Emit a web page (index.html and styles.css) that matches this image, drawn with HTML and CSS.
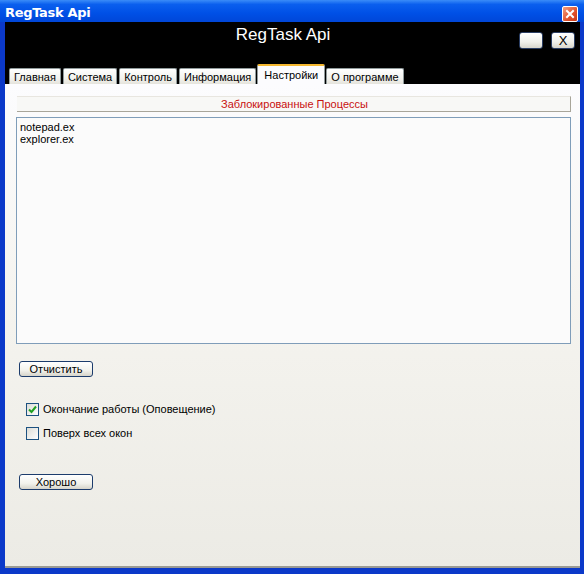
FILE: index.html
```html
<!DOCTYPE html>
<html>
<head>
<meta charset="utf-8">
<link rel="stylesheet" href="styles.css">
</head>
<body>
<div class="window">
  <div class="titlebar">
    <span class="title">RegTask Api</span>
    <span class="close-x">
      <svg width="14" height="14" viewBox="0 0 14 14"><path d="M4 4 L10 10 M10 4 L4 10" stroke="#fff" stroke-width="2" stroke-linecap="square"/></svg>
    </span>
  </div>
  <div class="client">
    <div class="header">
      <div class="header-top">
        <div class="spacer"></div>
        <div class="app-title">RegTask Api</div>
        <div class="hbtns">
          <button class="hbtn"></button>
          <button class="hbtn">X</button>
        </div>
      </div>
      <div class="tabs">
        <div class="tab">Главная</div>
        <div class="tab">Система</div>
        <div class="tab">Контроль</div>
        <div class="tab">Информация</div>
        <div class="tab active">Настройки</div>
        <div class="tab">О программе</div>
      </div>
    </div>
    <div class="panel">
      <div class="caption">Заблокированные Процессы</div>
      <div class="listbox">
        <div>notepad.ex</div>
        <div>explorer.ex</div>
      </div>
      <button class="btn btn-clear">Отчистить</button>
      <div class="checks">
        <label class="check"><span class="box checked"><svg width="9" height="9" viewBox="0 0 9 9"><path d="M1 4.5 L3.5 7 L8 1.5" fill="none" stroke="#21a121" stroke-width="2"/></svg></span>Окончание работы (Оповещение)</label>
        <label class="check"><span class="box"></span>Поверх всех окон</label>
      </div>
      <button class="btn btn-ok">Хорошо</button>
    </div>
  </div>
</div>
</body>
</html>
```
FILE: styles.css
```css
html, body {
  margin: 0;
  padding: 0;
  background: #ffffff;
}
.window {
  width: 584px;
  height: 574px;
  box-sizing: border-box;
  background: #0b39c9;
  padding: 0 4px 6px 5px;
  display: flex;
  flex-direction: column;
  font-family: "Liberation Sans", Arial, sans-serif;
  font-size: 11px;
}
.titlebar {
  height: 22px;
  margin: 0 -4px 0 -5px;
  background: linear-gradient(#3a8cf8 0%, #0a5fee 20%, #0050e6 60%, #0046d8 100%);
  display: flex;
  align-items: center;
  justify-content: space-between;
  padding: 0 6px 0 5px;
}
.title {
  color: #fff;
  font-weight: bold;
  font-size: 13px;
  font-family: "DejaVu Sans", sans-serif;
  letter-spacing: -0.3px;
  margin-top: 2px;
}
.close-x {
  width: 14px;
  height: 14px;
  border: 1px solid #fff;
  border-radius: 2px;
  background: linear-gradient(135deg, #f0a080, #e0502c 60%, #c83818);
  display: flex;
  align-items: center;
  justify-content: center;
  margin-top: 5px;
}
.client {
  flex: 1;
  display: flex;
  flex-direction: column;
}
.header {
  background: #000;
  height: 62px;
  display: flex;
  flex-direction: column;
  justify-content: space-between;
}
.header-top {
  display: grid;
  grid-template-columns: 1fr auto 1fr;
  padding: 3px 5px 0 0;
}
.app-title {
  color: #fff;
  font-size: 17px;
  font-family: "Liberation Sans", sans-serif;
  line-height: 20px;
  margin-right: 14px;
}
.hbtns {
  display: flex;
  justify-content: flex-end;
  gap: 8px;
  padding-top: 7px;
}
.hbtn {
  width: 24px;
  height: 17px;
  border: 1px solid #2b3e63;
  border-radius: 3px;
  background: linear-gradient(#ffffff, #f0f0ea 60%, #d8d6cc);
  padding: 0;
  font-family: "Liberation Sans", sans-serif;
  font-size: 13px;
  line-height: 13px;
  color: #000;
}
.tabs {
  display: flex;
  align-items: flex-end;
  padding-left: 4px;
  gap: 2px;
}
.tab {
  height: 16px;
  box-sizing: border-box;
  border: 1px solid #919b9c;
  border-bottom: none;
  border-radius: 2px 2px 0 0;
  background: linear-gradient(#ffffff, #f3f3ef 60%, #e5e4dc);
  padding: 1px 4px 0 4px;
  color: #000;
  line-height: 14px;
  white-space: nowrap;
}
.tab.active {
  height: 20px;
  margin: 0 -1px;
  padding: 3px 6px 0 6px;
  background: #fcfcfe;
  border-top: 2px solid #f5b830;
  line-height: 13px;
}
.panel {
  flex: 1;
  background: linear-gradient(#fcfcfe 0%, #f4f3ee 50%, #ecebe5 100%);
  border-bottom: 2px solid #9a9a94;
  display: flex;
  flex-direction: column;
  align-items: flex-start;
  padding: 12px 9px 0 11px;
}
.caption {
  align-self: stretch;
  margin-left: 1px;
  height: 16px;
  box-sizing: border-box;
  border-top: 1px solid #e8e6e0;
  border-right: 1px solid #a8a59a;
  border-bottom: 1px solid #a8a59a;
  background: #f8f8f6;
  text-align: center;
  color: #c81010;
  line-height: 14px;
  padding-left: 2px;
}
.listbox {
  align-self: stretch;
  height: 227px;
  box-sizing: border-box;
  margin-top: 5px;
  border: 1px solid #7f9db9;
  background: #fbfbfb;
  padding: 3px 3px;
  line-height: 12px;
  color: #000;
}
.btn {
  width: 74px;
  height: 16px;
  box-sizing: border-box;
  border: 1px solid #1c3c6c;
  border-radius: 3px;
  background: linear-gradient(#ffffff, #f2f2ec 60%, #d6d4ca);
  padding: 0;
  font-family: "Liberation Sans", sans-serif;
  font-size: 11px;
  line-height: 13px;
  color: #000;
  margin-left: 3px;
}
.btn-clear {
  margin-top: 17px;
}
.checks {
  margin-top: 26px;
  margin-left: 10px;
  display: flex;
  flex-direction: column;
  gap: 11px;
}
.check {
  display: flex;
  align-items: center;
  gap: 4px;
  height: 13px;
  line-height: 13px;
  color: #000;
}
.box {
  width: 13px;
  height: 13px;
  box-sizing: border-box;
  border: 1px solid #1c5180;
  background: linear-gradient(135deg, #dcdcd6, #ffffff);
  display: flex;
  align-items: center;
  justify-content: center;
}
.btn-ok {
  margin-top: 34px;
}
```
